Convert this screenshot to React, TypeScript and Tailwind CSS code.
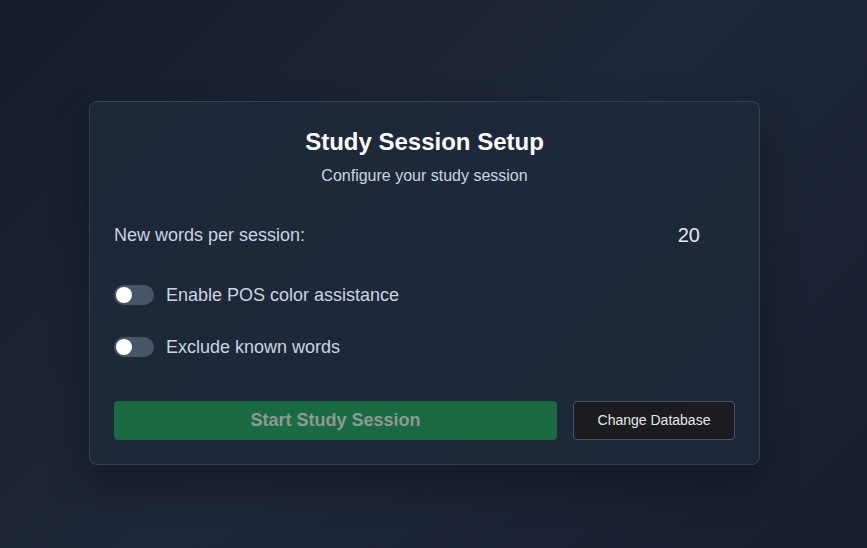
import { useState } from 'react';

const Toggle = ({ label }: { label: string }) => {
  const [on, setOn] = useState(false);
  return (
    <label className="flex items-center gap-3 cursor-pointer">
      <button
        type="button"
        onClick={() => setOn(!on)}
        className={`relative w-10 h-5 rounded-full ${on ? 'bg-[#3b82f6]' : 'bg-[#475569]'}`}
      >
        <span
          className={`absolute top-[2px] w-4 h-4 rounded-full bg-white ${on ? 'left-[22px]' : 'left-[2px]'}`}
        />
      </button>
      <span className="text-[18px] leading-7 text-[#cbd5e1]">{label}</span>
    </label>
  );
};

export default function App() {
  return (
    <div
      className="min-h-screen flex items-center justify-center pt-[18px] pr-[18px] bg-[linear-gradient(135deg,#151c2c_0%,#1e2739_50%,#161e30_100%)]"
      style={{ fontFamily: '"Liberation Sans", Arial, sans-serif' }}
    >
      <div className="w-[671px] rounded-lg border border-[#334155] bg-[#1e293b]/80 p-6 shadow-[0_20px_40px_rgba(0,0,0,0.3)]">
        <div className="text-center">
          <h1 className="text-[24px] font-bold text-white leading-8">Study Session Setup</h1>
          <p className="text-[16px] leading-6 text-[#cbd5e1] mt-[6px]">Configure your study session</p>
        </div>

        <div className="flex items-center justify-between mt-[33px] h-7">
          <span className="text-[18px] leading-7 text-[#cbd5e1]">New words per session:</span>
          <span className="text-[20px] leading-7 text-[#e2e8f0] mr-[35px]">20</span>
        </div>

        <div className="flex flex-col gap-6 mt-8">
          <Toggle label="Enable POS color assistance" />
          <Toggle label="Exclude known words" />
        </div>

        <div className="flex gap-4 mt-10">
          <button
            type="button"
            disabled
            className="flex-1 h-[39px] rounded-[4px] bg-[#1a6a43] text-[18px] font-bold text-[#8e9a93]"
          >
            Start Study Session
          </button>
          <button
            type="button"
            className="w-[162px] h-[39px] rounded-[4px] border border-[#475569] bg-[#1b1c20] text-[14px] text-[#e5e7eb]"
          >
            Change Database
          </button>
        </div>
      </div>
    </div>
  );
}
